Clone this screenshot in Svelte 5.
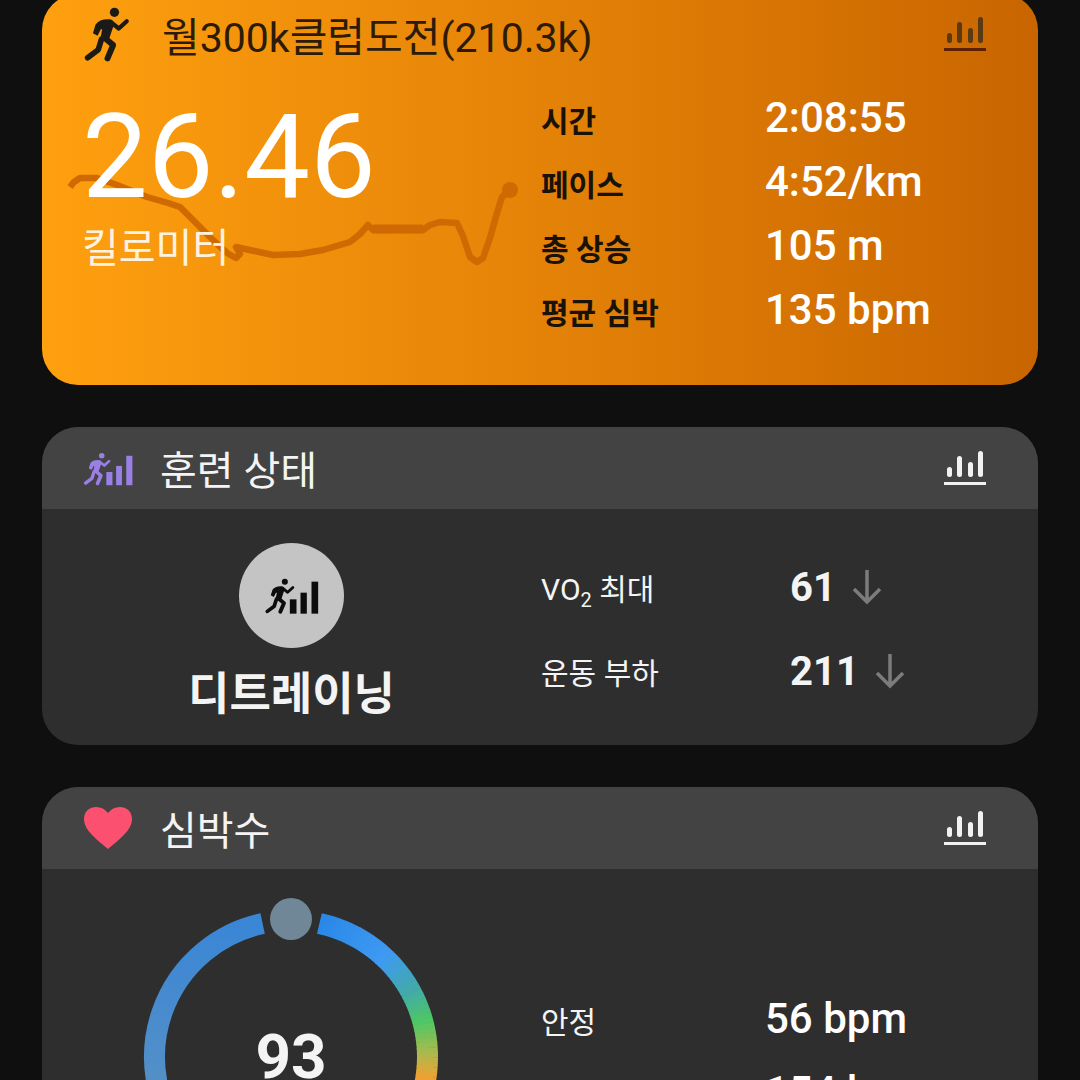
<script>
  const stats = [
    { label: '시간', value: '2:08:55' },
    { label: '페이스', value: '4:52/km' },
    { label: '총 상승', value: '105 m' },
    { label: '평균 심박', value: '135 bpm' }
  ];

  const route =
    'M70 187 L74 182 L80 178 L97 178 L117 185 L147 197 L168 203 L180 207 L190 217 L200 227 L214 241 L227 253 L236 258 L240 254 L236 247 L245 249 L273 255 L300 254 L323 250 L350 242 L360 234 L368 225 L373 230 L423 230 L430 225 L440 222 L457 223 L463 236 L470 257 L477 262 L483 258 L490 238 L497 213 L502 197 L510 190';

  const stops = [
    [12, [42, 136, 232]],
    [42, [62, 154, 242]],
    [60, [66, 170, 170]],
    [74, [78, 200, 100]],
    [88, [176, 184, 76]],
    [98, [240, 160, 50]],
    [130, [240, 140, 50]]
  ];

  const polar = (deg, r) => {
    const a = (deg * Math.PI) / 180;
    return [291 + r * Math.sin(a), 188 - r * Math.cos(a)];
  };

  const mix = (deg) => {
    for (let i = 1; i < stops.length; i++) {
      if (deg <= stops[i][0]) {
        const t = (deg - stops[i - 1][0]) / (stops[i][0] - stops[i - 1][0]);
        const c = stops[i - 1][1].map((v, n) => Math.round(v + (stops[i][1][n] - v) * t));
        return `rgb(${c.join(',')})`;
      }
    }
    return 'rgb(240,140,50)';
  };

  const segments = [];
  for (let deg = 12; deg < 130; deg += 2) {
    const [x1, y1] = polar(deg, 136.5);
    const [x2, y2] = polar(deg + 2.3, 136.5);
    segments.push({ d: `M${x1} ${y1}L${x2} ${y2}`, color: mix(deg) });
  }
  const [lx1, ly1] = polar(-12, 136.5);
  const [lx2, ly2] = polar(-130, 136.5);
  const leftArc = `M${lx1} ${ly1}A136.5 136.5 0 0 0 ${lx2} ${ly2}`;
</script>

{#snippet chart(color, base)}
  <svg class="chart" width="42" height="34" viewBox="0 0 42 34">
    <g fill={color}>
      <rect x="3" y="16" width="5" height="10" rx="2.5" />
      <rect x="13" y="5" width="5" height="21" rx="2.5" />
      <rect x="24" y="11" width="5" height="15" rx="2.5" />
      <rect x="34" y="0" width="5" height="26" rx="2.5" />
    </g>
    <rect x="0" y="31" width="42" height="3" fill={base} />
  </svg>
{/snippet}

{#snippet runner(color)}
  <circle cx="137" cy="37" r="14" fill={color} />
  <path
    fill={color}
    d="M80 74 Q92 56 124 58 Q137 60 134 78 L120 120 L94 120 L100 88 L96 88 L86 108 L72 100 Z"
  />
  <g fill="none" stroke={color} stroke-linecap="round" stroke-linejoin="round">
    <path stroke-width="13" d="M128 68 L150 86 L174 64" />
    <path stroke-width="18" d="M105 112 L133 136 L116 176" />
    <path stroke-width="17" d="M98 118 L88 150 L56 174" />
  </g>
{/snippet}

{#snippet runnerBars(color)}
  <g transform="translate(76 98) scale(0.65)">
    {@render runner(color)}
  </g>
  <g fill={color}>
    <rect x="180" y="175" width="20" height="43" />
    <rect x="212" y="155" width="19" height="63" />
    <rect x="245" y="122" width="20" height="96" />
  </g>
{/snippet}

<div class="page">
  <section class="card run">
    <svg class="route" width="996" height="300" viewBox="42 0 996 300">
      <path d={route} fill="none" stroke="#cf6a02" stroke-width="6.5" stroke-linejoin="round" />
      <path d="M373 229 L423 229" stroke="#cf6a02" stroke-width="9" />
      <circle cx="510" cy="190" r="8" fill="#cf6a02" />
    </svg>
    <header class="run-head">
      <svg class="head-icon" width="50" height="58" viewBox="45 15 145 175">
        {@render runner('#1c1a17')}
      </svg>
      <h2 class="run-title">월300k클럽도전(210.3k)</h2>
      {@render chart('#5a3a12', '#5c1f00')}
    </header>
    <div class="run-body">
      <div class="distance">
        <div class="big">26.46</div>
        <div class="unit">킬로미터</div>
      </div>
      <dl class="stats">
        {#each stats as s}
          <dt>{s.label}</dt>
          <dd>{s.value}</dd>
        {/each}
      </dl>
    </div>
  </section>

  <section class="card dark">
    <header class="head">
      <svg class="head-icon" width="50" height="35" viewBox="104 107 163 113">
        {@render runnerBars('#9a7fe6')}
      </svg>
      <h2>훈련 상태</h2>
      {@render chart('#f2f2f2', '#f2f2f2')}
    </header>
    <div class="status">
      <div class="status-left">
        <div class="badge">
          <svg width="57" height="40" viewBox="100 105 170 120">
            {@render runnerBars('#0c0c0c')}
          </svg>
        </div>
        <div class="status-name">디트레이닝</div>
      </div>
      <div class="metrics">
        <div class="metric">
          <span class="metric-label">VO<sub>2</sub> 최대</span>
          <span class="metric-value">61</span>
          <svg width="30" height="36" viewBox="0 0 30 36">
            <path d="M15 1V33M2 20L15 33L28 20" fill="none" stroke="#7c7c7c" stroke-width="3.5" />
          </svg>
        </div>
        <div class="metric">
          <span class="metric-label">운동 부하</span>
          <span class="metric-value">211</span>
          <svg width="30" height="36" viewBox="0 0 30 36">
            <path d="M15 1V33M2 20L15 33L28 20" fill="none" stroke="#7c7c7c" stroke-width="3.5" />
          </svg>
        </div>
      </div>
    </div>
  </section>

  <section class="card dark heart">
    <header class="head">
      <svg class="head-icon" width="50" height="44" viewBox="0 0 50 44">
        <path
          d="M25 43 C16 35 1 25 1 13 C1 5 7 1 13 1 C18 1 22 3 25 7 C28 3 32 1 37 1 C43 1 49 5 49 13 C49 25 34 35 25 43Z"
          fill="#fb5070"
        />
      </svg>
      <h2>심박수</h2>
      {@render chart('#f2f2f2', '#f2f2f2')}
    </header>
    <div class="hr">
      <svg class="ring" width="996" height="340" viewBox="42 0 996 340">
        <defs>
          <linearGradient id="left-arc" x1="0" y1="0" x2="0" y2="1">
            <stop offset="0" stop-color="#3a86d6" />
            <stop offset="0.75" stop-color="#5590c6" />
          </linearGradient>
        </defs>
        <path d={leftArc} fill="none" stroke="url(#left-arc)" stroke-width="21" />
        {#each segments as seg}
          <path d={seg.d} fill="none" stroke={seg.color} stroke-width="21" />
        {/each}
        <circle cx="291" cy="50" r="21" fill="#708797" />
      </svg>
      <div class="hr-now">93</div>
      <dl class="stats hr-stats">
        <dt class="plain">안정</dt>
        <dd>56 bpm</dd>
        <dt class="plain">최대</dt>
        <dd>154 bpm</dd>
      </dl>
    </div>
  </section>
</div>

<style>
  :global(body) {
    margin: 0;
    background: #0f0f0f;
  }

  .page {
    height: 1080px;
    overflow: hidden;
    display: flex;
    flex-direction: column;
    gap: 42px;
    padding: 0 42px;
    font-family: Roboto, 'Noto Sans CJK KR', sans-serif;
    color: #f4f4f4;
  }

  .card {
    position: relative;
    flex: none;
    border-radius: 36px;
    overflow: hidden;
  }

  .run {
    height: 391px;
    margin-top: -6px;
    background: linear-gradient(90deg, #ffa00f 0%, #c96500 100%);
  }

  .route {
    position: absolute;
    left: 0;
    top: 6px;
  }

  .run-head,
  .head {
    position: relative;
    display: flex;
    align-items: center;
    padding: 0 52px 0 41px;
  }

  .run-head {
    height: 80px;
    color: #2c1b08;
  }

  .head {
    height: 82px;
    background: #434343;
  }

  .head-icon {
    flex: none;
    margin-right: 27px;
  }

  h2 {
    flex: 1;
    margin: 0;
    font-size: 40px;
    font-weight: 400;
    white-space: nowrap;
  }

  .run-title {
    font-size: 41px;
    margin-left: 2px;
  }

  .chart {
    flex: none;
  }

  .run-body {
    position: relative;
    display: flex;
    margin-top: 6px;
  }

  .distance {
    width: 499px;
    flex: none;
    padding-left: 40px;
    box-sizing: border-box;
    color: #fff;
  }

  .big {
    font-size: 117px;
    line-height: 136px;
    margin-top: 9px;
  }

  .unit {
    font-size: 40px;
    line-height: 44px;
    margin-top: 2px;
    color: #fff3e0;
  }

  .stats {
    display: grid;
    grid-template-columns: 224px auto;
    grid-auto-rows: 64px;
    align-items: center;
    margin: 0;
    padding-top: 7px;
  }

  .stats dt {
    font-size: 30px;
    font-weight: 700;
    color: #1a1208;
  }

  .stats dd {
    margin: 0;
    padding-bottom: 3px;
    font-size: 42px;
    font-weight: 500;
    color: #fff;
  }

  .dark {
    background: #2e2e2e;
  }

  .status {
    height: 236px;
    display: flex;
  }

  .status-left {
    width: 499px;
    flex: none;
    display: flex;
    flex-direction: column;
    align-items: center;
    padding-top: 34px;
    box-sizing: border-box;
  }

  .badge {
    width: 105px;
    height: 105px;
    border-radius: 50%;
    background: #c4c4c4;
    display: flex;
    align-items: center;
    justify-content: center;
  }

  .status-name {
    margin-top: 17px;
    font-size: 45px;
    line-height: 60px;
    font-weight: 700;
  }

  .metrics {
    padding-top: 36px;
  }

  .metric {
    display: flex;
    align-items: center;
    height: 84px;
  }

  .metric-label {
    width: 249px;
    font-size: 30px;
  }

  .metric-label sub {
    font-size: 20px;
    line-height: 0;
  }

  .metric-value {
    font-size: 40px;
    font-weight: 700;
    margin-right: 16px;
  }

  .heart {
    height: 400px;
  }

  .hr {
    position: relative;
    display: flex;
    justify-content: flex-end;
  }

  .ring {
    position: absolute;
    left: 0;
    top: 0;
  }

  .hr-now {
    position: absolute;
    left: 149px;
    top: 152px;
    width: 200px;
    text-align: center;
    font-size: 62px;
    font-weight: 700;
    line-height: 72px;
  }

  .hr-stats {
    position: relative;
    width: 497px;
    margin-top: 114px;
    padding-top: 0;
    grid-auto-rows: 73px;
  }

  .hr-stats dt.plain {
    font-weight: 400;
    color: #f4f4f4;
  }
</style>
